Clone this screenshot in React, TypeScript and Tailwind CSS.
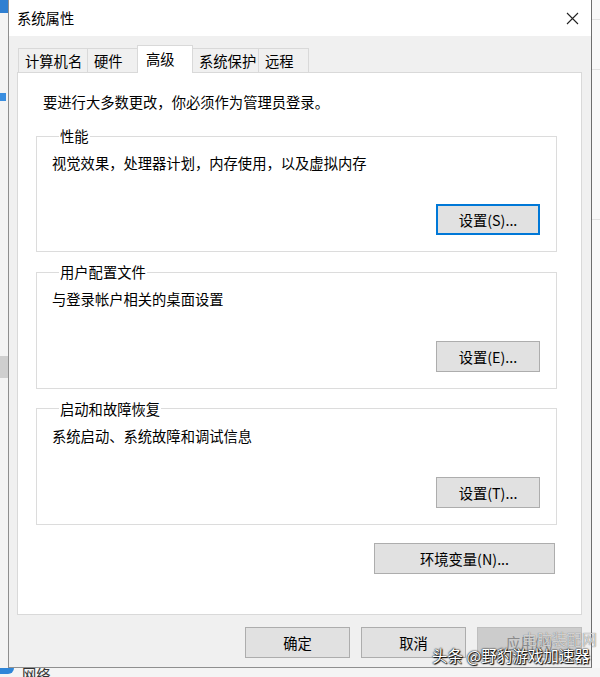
import type { ReactNode } from 'react';

const tabs = [
  { label: '计算机名', width: 'w-[70px]' },
  { label: '硬件', width: 'w-[51px]' },
  { label: '高级', width: 'w-[56px]', active: true },
  { label: '系统保护', width: 'w-[67px]' },
  { label: '远程', width: 'w-[51px]' },
];

export default function App() {
  return (
    <div className="relative w-[600px] h-[677px] overflow-hidden bg-[#f3f3f3] flex flex-col text-[14.3px] text-black font-['Microsoft_YaHei','Noto_Sans_CJK_SC',sans-serif]">
      <div className="flex h-[668px]">
        {/* desktop behind, left side */}
        <div className="w-[8px] flex flex-col bg-[#f4f4f4]">
          <div className="h-[13px] bg-[#2f7fd1]" />
          <div className="h-[80px]" />
          <div className="h-[8px] w-[6px] bg-[#3a8ee0]" />
          <div className="h-[255px]" />
          <div className="h-[22px] bg-[#cfcfcf]" />
        </div>

        {/* dialog */}
        <div className="w-[584px] border-l border-r border-b border-l-[#8f8f8f] border-r-[#6d6d6d] border-b-[#8f8f8f] bg-[#f0f0f0] flex flex-col">
          <div className="h-[36px] bg-white flex items-center justify-between pl-[8px] pr-[12px]">
            <span>系统属性</span>
            <svg width="13" height="13" viewBox="0 0 13 13" className="text-[#222]">
              <path d="M1 1 L12 12 M12 1 L1 12" stroke="currentColor" strokeWidth="1.1" fill="none" />
            </svg>
          </div>

          <div className="flex-1 pl-[8px] pr-[9px] pt-[9px] flex flex-col">
            {/* tab strip */}
            <div className="h-[27px] flex items-end pl-[2px]">
              {tabs.map((t) =>
                t.active ? (
                  <div
                    key={t.label}
                    className={`${t.width} h-[28px] -mb-px -ml-px relative z-10 bg-white border-t border-l border-r border-[#d9d9d9] pl-[8px] pt-[3px] leading-[20px]`}
                  >
                    {t.label}
                  </div>
                ) : (
                  <div
                    key={t.label}
                    className={`${t.width} h-[24px] -ml-px bg-[#f0f0f0] border-t border-l border-r border-[#d9d9d9] pl-[6px] pt-[2px] leading-[20px]`}
                  >
                    {t.label}
                  </div>
                )
              )}
            </div>

            {/* tab panel */}
            <div className="h-[543px] bg-white border border-[#d9d9d9] flex flex-col">
              <p className="pl-[25px] pt-[19px] leading-[20px]">要进行大多数更改，你必须作为管理员登录。</p>

              <div className="pl-[18px] pr-[24px] flex flex-col">
                <GroupBox title="性能" className="mt-[14px]">
                  视觉效果，处理器计划，内存使用，以及虚拟内存
                  <SettingsButton focused>设置(S)...</SettingsButton>
                </GroupBox>
                <GroupBox title="用户配置文件" className="mt-[10px]">
                  与登录帐户相关的桌面设置
                  <SettingsButton>设置(E)...</SettingsButton>
                </GroupBox>
                <GroupBox title="启动和故障恢复" className="mt-[10px]">
                  系统启动、系统故障和调试信息
                  <SettingsButton>设置(T)...</SettingsButton>
                </GroupBox>
              </div>

              <div className="mt-[18px] pr-[26px] flex justify-end">
                <button className="w-[181px] h-[31px] bg-[#e1e1e1] border border-[#adadad]">环境变量(N)...</button>
              </div>
            </div>

            {/* dialog buttons */}
            <div className="mt-[12px] flex justify-end gap-[11px]">
              <button className="w-[105px] h-[31px] bg-[#e1e1e1] border border-[#adadad]">确定</button>
              <button className="w-[105px] h-[31px] bg-[#e1e1e1] border border-[#adadad]">取消</button>
              <button className="w-[105px] h-[31px] bg-[#cccccc] border border-[#bfbfbf] text-[#8a8a8a]">应用(A)</button>
            </div>
          </div>
        </div>

        {/* desktop behind, right side */}
        <div className="flex-1 bg-[#f8f8f8] flex flex-col">
          <div className="h-[20px] border-b border-[#e2e2e2]" />
          <div className="h-[50px] border-b border-[#e2e2e2]" />
          <div className="h-[150px] border-b border-[#e2e2e2]" />
        </div>
      </div>

      {/* strip under the dialog */}
      <div className="h-[9px] flex items-start bg-[#f4f4f4] overflow-hidden">
        <div className="w-[14px] h-[6px] bg-[#2f86d8] rounded-br-[6px]" />
        <span className="ml-[8px] -mt-[4px] leading-[20px] text-[#333]">网络</span>
      </div>

      {/* watermark */}
      <div className="absolute left-[522px] top-[630px] text-[15px] leading-[18px] text-white/70 [text-shadow:0_0_1px_#555]">
        电脑装配网
      </div>
      <div className="absolute left-[432px] top-[645px] text-[15.5px] leading-[20px] text-white [text-shadow:0_0_1px_#000,0_0_2px_#000,1px_1px_1px_#000]">
        头条 @野豹游戏加速器
      </div>
    </div>
  );
}

function GroupBox({ title, className, children }: { title: string; className?: string; children: ReactNode }) {
  return (
    <fieldset className={`border border-[#dcdcdc] pl-[15px] pr-[16px] pt-[6px] pb-[16px] flex flex-col ${className ?? ''}`}>
      <legend className="ml-[7px] px-[1px] leading-[20px]">{title}</legend>
      {children}
    </fieldset>
  );
}

function SettingsButton({ children, focused }: { children: ReactNode; focused?: boolean }) {
  return (
    <div className="mt-[31px] flex justify-end">
      <button
        className={`w-[104px] h-[31px] bg-[#e1e1e1] ${focused ? 'border-2 border-[#0078d7]' : 'border border-[#adadad]'}`}
      >
        {children}
      </button>
    </div>
  );
}
